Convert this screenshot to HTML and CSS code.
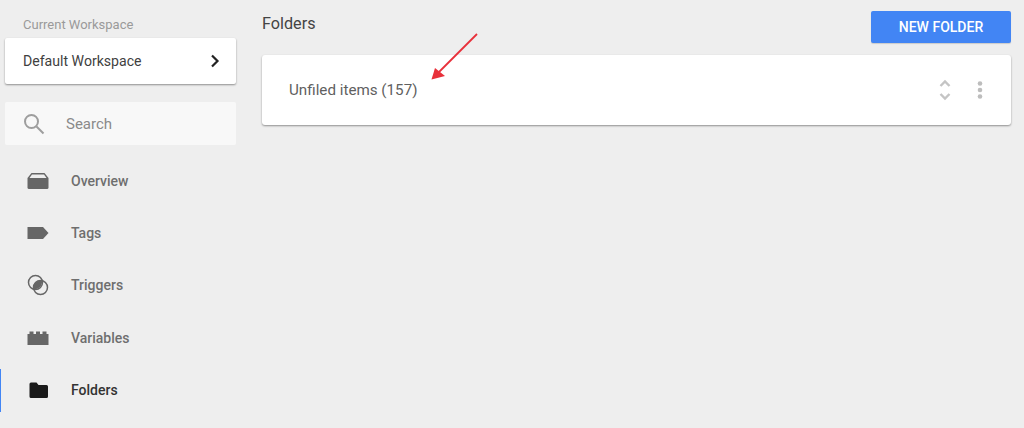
FILE: index.html
```html
<!DOCTYPE html>
<html lang="en">
<head>
  <meta charset="UTF-8">
  <meta name="viewport" content="width=device-width, initial-scale=1.0">
  <title>Folders</title>
  <link rel="stylesheet" href="styles.css">
</head>
<body>
  <div class="page">
    <!-- Sidebar -->
    <div class="sidebar">
      <div class="workspace-label">Current Workspace</div>
      <div class="workspace-card">
        <span>Default Workspace</span>
        <svg class="chevron" width="12" height="14" viewBox="0 0 12 14"><path d="M3 1.500 8.500 7 3 12.500" fill="none" stroke="#222" stroke-width="2.200"/></svg>
      </div>
      <div class="search">
        <svg class="search-icon" width="22" height="22" viewBox="0 0 22 22"><circle cx="8.500" cy="8.500" r="6.500" fill="none" stroke="#9e9e9e" stroke-width="2"/><path d="m13.500 13.500 7 7" fill="none" stroke="#9e9e9e" stroke-width="2"/></svg>
        <span>Search</span>
      </div>
      <div class="nav">
        <div class="nav-item">
          <svg width="22" height="18" viewBox="0 0 22 18"><path d="M4.500 1h13L21.500 6v9.500a1.500 1.500 0 0 1-1.500 1.500H2a1.500 1.500 0 0 1-1.500-1.500V6z" fill="#666"/><path d="M5 2.500h12L19.500 6h-17z" fill="#eee"/></svg>
          <span>Overview</span>
        </div>
        <div class="nav-item">
          <svg width="22" height="18" viewBox="0 0 22 18"><path d="M.5 3h15.500l5.500 6-5.500 6H.500z" fill="#666"/></svg>
          <span>Tags</span>
        </div>
        <div class="nav-item">
          <svg width="22" height="22" viewBox="0 0 22 22"><circle cx="8.500" cy="8.500" r="7" fill="none" stroke="#666" stroke-width="1.500"/><circle cx="13.500" cy="13.500" r="7" fill="none" stroke="#666" stroke-width="1.500"/><path d="M14.900 6.700a7 7 0 0 1-8.200 8.200 7 7 0 0 1 8.200-8.200z" fill="#666"/></svg>
          <span>Triggers</span>
        </div>
        <div class="nav-item">
          <svg width="22" height="18" viewBox="0 0 22 18"><path d="M.5 5h2V2.500h4V5h2.500V2.500h4V5h2.500V2.500h4V5h2v11H.5z" fill="#666"/></svg>
          <span>Variables</span>
        </div>
        <div class="nav-item active">
          <svg width="22" height="18" viewBox="0 0 22 18"><path d="M4 1.500h5.500l2 2.500h8A1.500 1.500 0 0 1 21 5.500v10a1.500 1.500 0 0 1-1.500 1.500H4a1.500 1.500 0 0 1-1.500-1.500V3A1.500 1.500 0 0 1 4 1.500z" fill="#1a1a1a"/></svg>
          <span>Folders</span>
        </div>
      </div>
    </div>

    <!-- Main content -->
    <div class="main">
      <div class="main-head">
        <h1>Folders</h1>
        <button class="new-folder">NEW FOLDER</button>
      </div>
      <div class="folder-card">
        <span class="folder-name">Unfiled items (157)</span>
        <div class="folder-actions">
          <svg width="14" height="24" viewBox="0 0 14 24"><path d="M2.500 8 7 3.500 11.500 8M2.500 16 7 20.500 11.500 16" fill="none" stroke="#c4c4c4" stroke-width="2.400"/></svg>
          <svg width="6" height="20" viewBox="0 0 6 20"><circle cx="3" cy="3.500" r="2.300" fill="#bdbdbd"/><circle cx="3" cy="10" r="2.300" fill="#bdbdbd"/><circle cx="3" cy="16.500" r="2.300" fill="#bdbdbd"/></svg>
        </div>
      </div>
    </div>
  </div>

  <!-- Red arrow drawn over the screenshot -->
  <svg class="arrow" width="50" height="50" viewBox="0 0 50 50"><path d="M47 1 9 39" fill="none" stroke="#e8303a" stroke-width="1.800"/><path d="M1.500 46.500 5 35 15 43z" fill="#e8303a"/></svg>
</body>
</html>
```

FILE: styles.css
```css
html, body {
  margin: 0;
  padding: 0;
}

body {
  width: 1024px;
  height: 428px;
  overflow: hidden;
  position: relative;
  background-color: #eeeeee;
  font-family: Roboto, "Liberation Sans", sans-serif;
}

.page {
  display: flex;
}

/* Sidebar */
.sidebar {
  width: 262px;
  flex-shrink: 0;
}

.workspace-label {
  height: 38px;
  box-sizing: border-box;
  padding: 17px 0 0 23px;
  font-size: 13px;
  line-height: 15px;
  color: #9a9a9a;
}

.workspace-card {
  width: 231px;
  height: 46px;
  margin-left: 5px;
  padding: 0 18px;
  box-sizing: border-box;
  display: flex;
  align-items: center;
  justify-content: space-between;
  background-color: #fff;
  border-radius: 2px;
  box-shadow: 0 1px 2px rgba(0, 0, 0, 0.4);
  font-size: 14.1px;
  color: #3f3f3f;
}

.chevron {
  margin-right: -3px;
}

.search {
  width: 231px;
  height: 43px;
  margin: 18px 0 0 5px;
  padding-left: 18px;
  box-sizing: border-box;
  display: flex;
  align-items: center;
  gap: 21px;
  background-color: #f8f8f8;
  border-radius: 2px;
  font-size: 15px;
  color: #8a8a8a;
}

.nav {
  margin-top: 9.4px;
}

.nav-item {
  height: 52.4px;
  padding-left: 27px;
  box-sizing: border-box;
  display: flex;
  align-items: center;
  font-size: 14px;
  font-weight: 500;
  color: #6e6e6e;
}

.nav-item svg {
  flex-shrink: 0;
}

.nav-item span {
  margin-left: 22px;
}

.nav-item.active {
  color: #333;
  background: linear-gradient(#4285f4, #4285f4) left center / 1px 43px no-repeat;
}

/* Main */
.main {
  width: 749px;
}

.main-head {
  height: 55px;
  display: flex;
  justify-content: space-between;
  align-items: flex-start;
}

h1 {
  margin: 14px 0 0;
  font-size: 16.2px;
  line-height: 19px;
  font-weight: 400;
  color: #444;
}

.new-folder {
  width: 140px;
  height: 32px;
  margin-top: 11px;
  padding: 0;
  border: none;
  border-radius: 2px;
  background-color: #4285f4;
  color: #fff;
  font-family: inherit;
  font-size: 14px;
  font-weight: 500;
  box-shadow: 0 1px 1px rgba(0, 0, 0, 0.15);
}

.folder-card {
  height: 70px;
  padding: 0 28px 0 27px;
  box-sizing: border-box;
  display: flex;
  align-items: center;
  justify-content: space-between;
  background-color: #fff;
  border-radius: 3px;
  box-shadow: 0 1px 2px rgba(0, 0, 0, 0.4);
}

.folder-name {
  font-size: 15.2px;
  color: #5f5f5f;
}

.folder-actions {
  display: flex;
  align-items: center;
  gap: 25px;
}

.arrow {
  position: absolute;
  left: 430px;
  top: 33px;
}
```
